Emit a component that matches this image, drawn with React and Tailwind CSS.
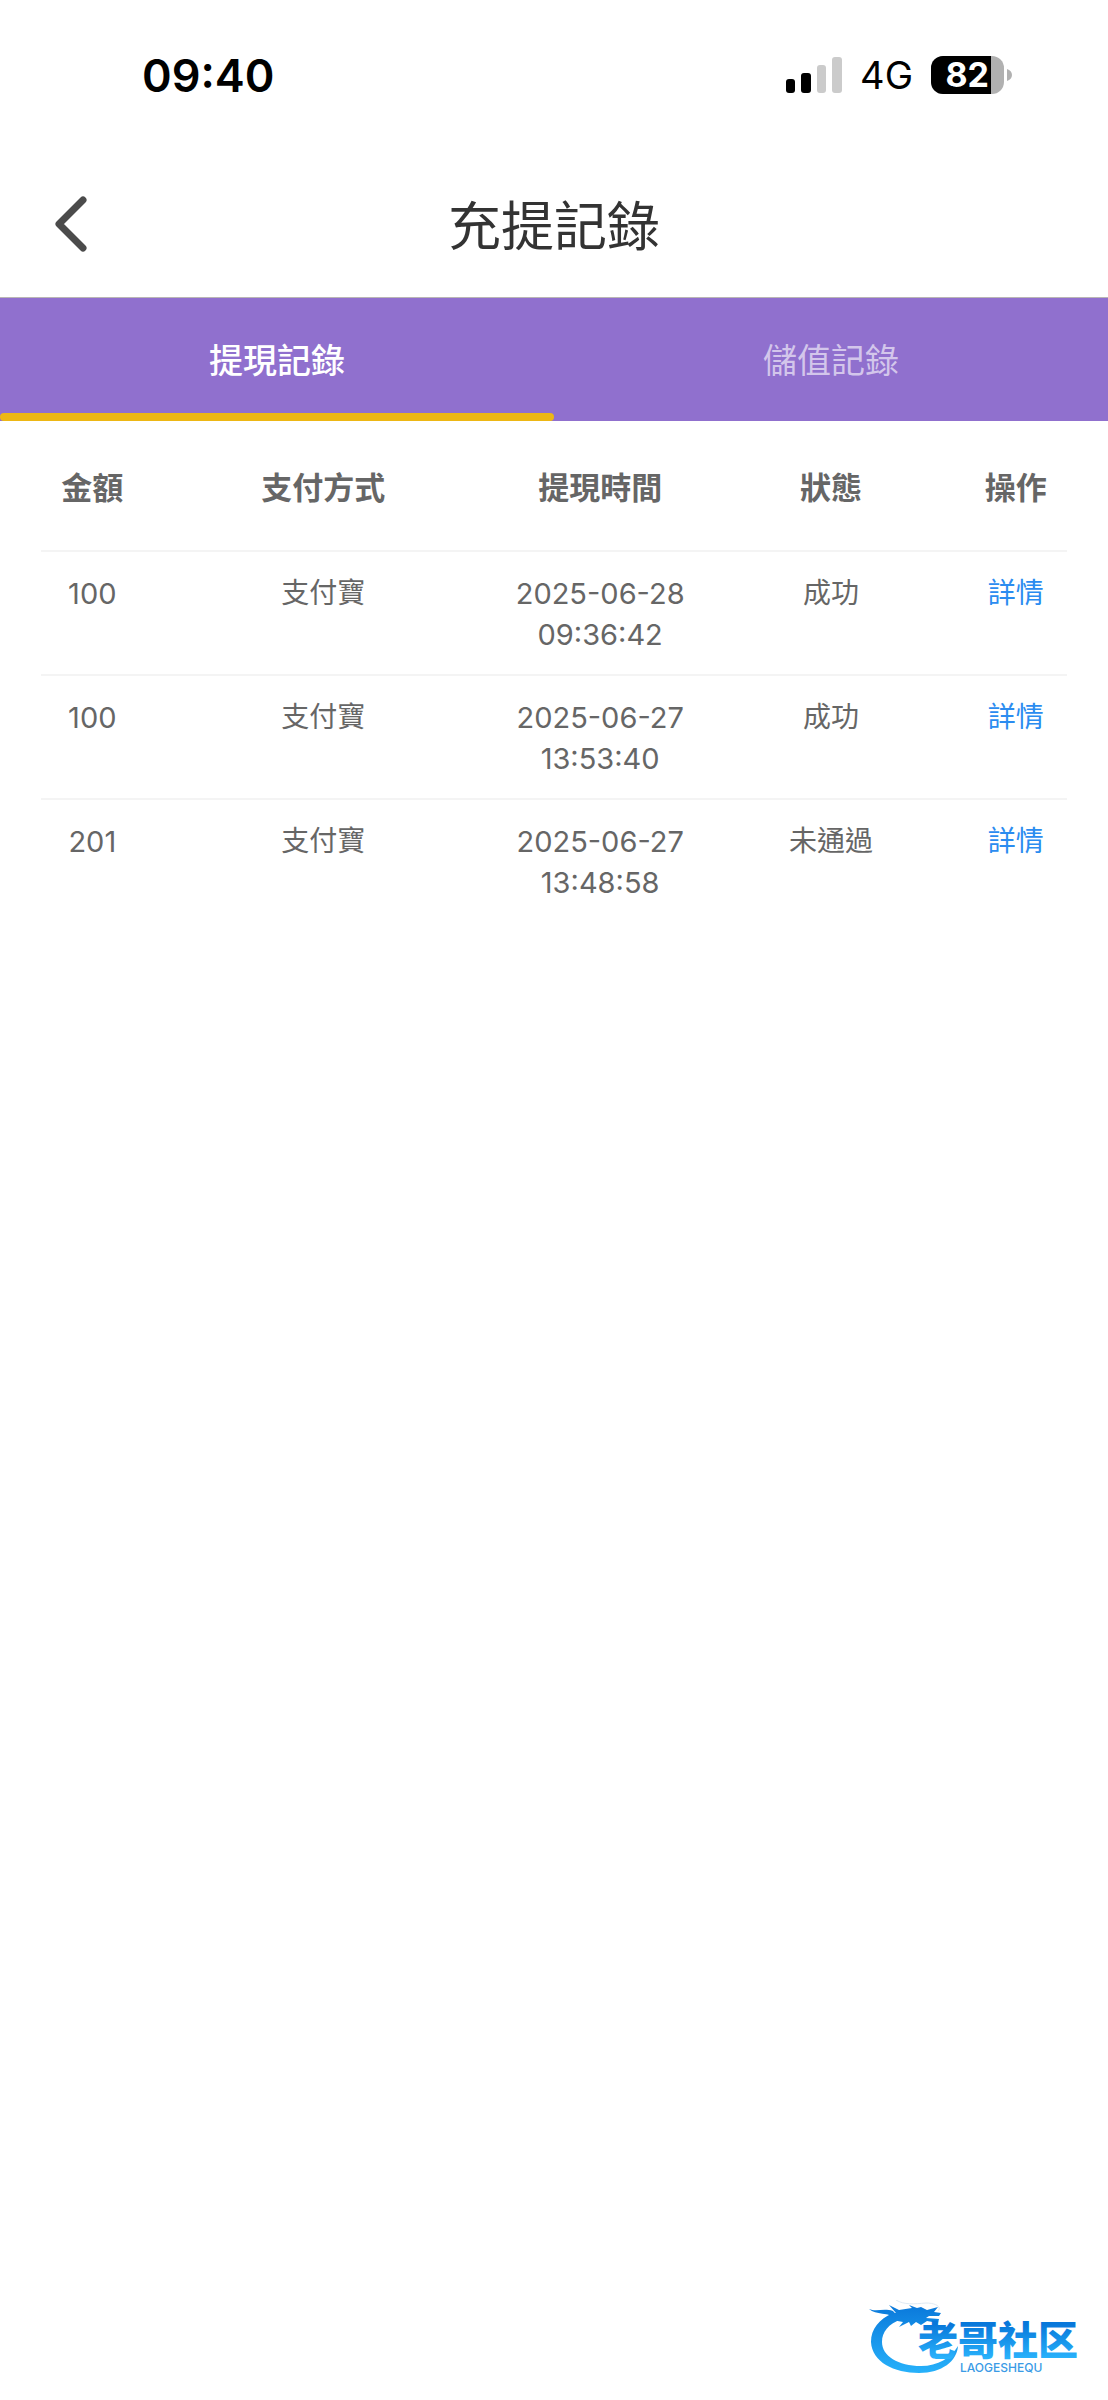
import { useState } from 'react';

const tabs = [
  { id: 'withdraw', label: '提現記錄' },
  { id: 'deposit', label: '儲值記錄' },
];

const columns = [
  { label: '金額', width: 'w-[10%]' },
  { label: '支付方式', width: 'w-[35%]' },
  { label: '提現時間', width: 'w-[19%]' },
  { label: '狀態', width: 'w-[26%]' },
  { label: '操作', width: 'w-[10%]' },
];

const records = [
  { amount: '100', method: '支付寶', date: '2025-06-28', time: '09:36:42', status: '成功' },
  { amount: '100', method: '支付寶', date: '2025-06-27', time: '13:53:40', status: '成功' },
  { amount: '201', method: '支付寶', date: '2025-06-27', time: '13:48:58', status: '未通過' },
];

function StatusBar() {
  return (
    <div className="flex h-[150px] items-center justify-between pr-[96px] pl-[142px] text-black">
      <span className="text-[45px] leading-none font-semibold">09:40</span>
      <div className="flex items-center gap-[18px]">
        <svg className="h-[38px] w-[58px]" viewBox="0 0 58 38" aria-hidden="true">
          <rect x="2" y="23" width="9" height="14" rx="3" />
          <rect x="17" y="17" width="10" height="20" rx="3" />
          <rect x="33" y="9" width="9" height="28" rx="3" fill="#cbcbcb" />
          <rect x="48" y="1" width="10" height="36" rx="3" fill="#cbcbcb" />
        </svg>
        <span className="text-[38px] leading-none">4G</span>
        <div className="flex items-center gap-[3px]">
          <div className="flex h-[38px] w-[73px] items-center rounded-[12px] bg-[#b1b1b1]">
            <span className="flex h-full w-[60px] items-center justify-end rounded-l-[12px] bg-black pr-[2px] text-[34px] leading-none font-bold text-white">
              82
            </span>
          </div>
          <svg className="h-[12px] w-[5px]" viewBox="0 0 5 12" aria-hidden="true">
            <path d="M0 0C3 1 5 3 5 6C5 9 3 11 0 12Z" fill="#b1b1b1" />
          </svg>
        </div>
      </div>
    </div>
  );
}

function Header() {
  return (
    <header className="grid h-[148px] grid-cols-[120px_1fr_120px] items-center border-b border-[#b9b5b5]">
      <button type="button" aria-label="返回" className="flex h-full items-center pl-[54px]">
        <svg className="h-[56px] w-[34px]" viewBox="0 0 34 56" fill="none" aria-hidden="true">
          <path
            d="M29 4L5 28L29 52"
            stroke="#4b4b4b"
            strokeWidth="7"
            strokeLinecap="round"
            strokeLinejoin="round"
          />
        </svg>
      </button>
      <h1 className="pt-2 text-center text-[53px] leading-none text-[#333333]">充提記錄</h1>
    </header>
  );
}

// Community logo: dragon ring with the wordmark beside it
function Logo() {
  return (
    <svg className="h-[76px] w-[222px]" viewBox="0 0 222 76" role="img" aria-label="老哥社区">
      <defs>
        <linearGradient id="ring" x1="0" y1="4" x2="0" y2="74" gradientUnits="userSpaceOnUse">
          <stop offset="0" stopColor="#0a78da" />
          <stop offset="1" stopColor="#27b2fb" />
        </linearGradient>
        <linearGradient id="word" x1="0" y1="24" x2="0" y2="60" gradientUnits="userSpaceOnUse">
          <stop offset="0" stopColor="#0877da" />
          <stop offset="1" stopColor="#2bb5fd" />
        </linearGradient>
      </defs>
      <g fill="url(#ring)">
        <path d="M25 13C11 19 3 29 3 42C4 62 26 73 51 73C74 73 89 61 90 46C83 58 70 66 53 66C30 66 14 56 14 42C14 32 20 24 34 19Z" />
        <path d="M21 5L31 10L44 8L41 5L49 8L53 7L59 10L70 7L66 12L73 13L71 16L61 16L58 18L71 19L70 23L59 21L53 25L48 22L43 26L41 22L31 27L35 22L24 20L19 12L28 13Z" />
        <path d="M1 9C8 12 16 8 25 11L30 17C20 13 8 15 1 9Z" />
      </g>
      <path
        d="M28 0C36 5 46 4 58 3C68 3 74 7 70 11"
        fill="none"
        stroke="#dfeaf4"
        strokeWidth="1"
      />
      <text x="50" y="55" fontSize="40" fontWeight="900" fill="url(#word)" className="font-['Noto_Sans_CJK_SC',sans-serif]">
        老哥社区
      </text>
      <text x="92" y="72" fontSize="12" fontWeight="500" fill="#3a9be6" className="font-['Inter',sans-serif]">
        LAOGESHEQU
      </text>
    </svg>
  );
}

export default function App() {
  const [activeTab, setActiveTab] = useState('withdraw');

  return (
    <div className="flex min-h-screen flex-col bg-white font-['Inter','Noto_Sans_CJK_TC',sans-serif]">
      <StatusBar />
      <Header />

      {/* 分頁 */}
      <div role="tablist" className="grid h-[123px] grid-cols-2 bg-[#9070ce]">
        {tabs.map((tab) => (
          <button
            key={tab.id}
            type="button"
            role="tab"
            aria-selected={activeTab === tab.id}
            onClick={() => setActiveTab(tab.id)}
            className={`relative pt-[2px] text-[34px] leading-none ${
              activeTab === tab.id ? 'font-medium text-white' : 'text-[#d3c6eb]'
            }`}
          >
            {tab.label}
            {activeTab === tab.id && (
              <span className="absolute inset-x-0 bottom-0 h-[8px] rounded-[4px] bg-[#edb714]" />
            )}
          </button>
        ))}
      </div>

      {/* 記錄列表 */}
      <main className="px-[41px]">
        <table className="w-full table-fixed border-separate border-spacing-0 text-center text-[#666666]">
          <thead>
            <tr>
              {columns.map((column) => (
                <th
                  key={column.label}
                  scope="col"
                  className={`pt-[46px] pb-[41px] text-[31px] leading-[42px] font-bold whitespace-nowrap ${column.width}`}
                >
                  {column.label}
                </th>
              ))}
            </tr>
          </thead>
          <tbody className="text-[28px] leading-[41px] [&_td]:border-t-2 [&_td]:border-[#f4f4f4] [&_td]:pt-[21px] [&_td]:pb-[19px] [&_td]:align-top">
            {records.map((record) => (
              <tr key={record.date + record.time}>
                <td className="text-[29px]">{record.amount}</td>
                <td>{record.method}</td>
                <td className="text-[29px]">
                  {record.date} {record.time}
                </td>
                <td>{record.status}</td>
                <td>
                  <a href="#detail" className="text-[#2b8cf0]">
                    詳情
                  </a>
                </td>
              </tr>
            ))}
          </tbody>
        </table>
      </main>

      <footer className="mt-auto flex justify-end pr-[18px] pb-[24px]">
        <Logo />
      </footer>
    </div>
  );
}
